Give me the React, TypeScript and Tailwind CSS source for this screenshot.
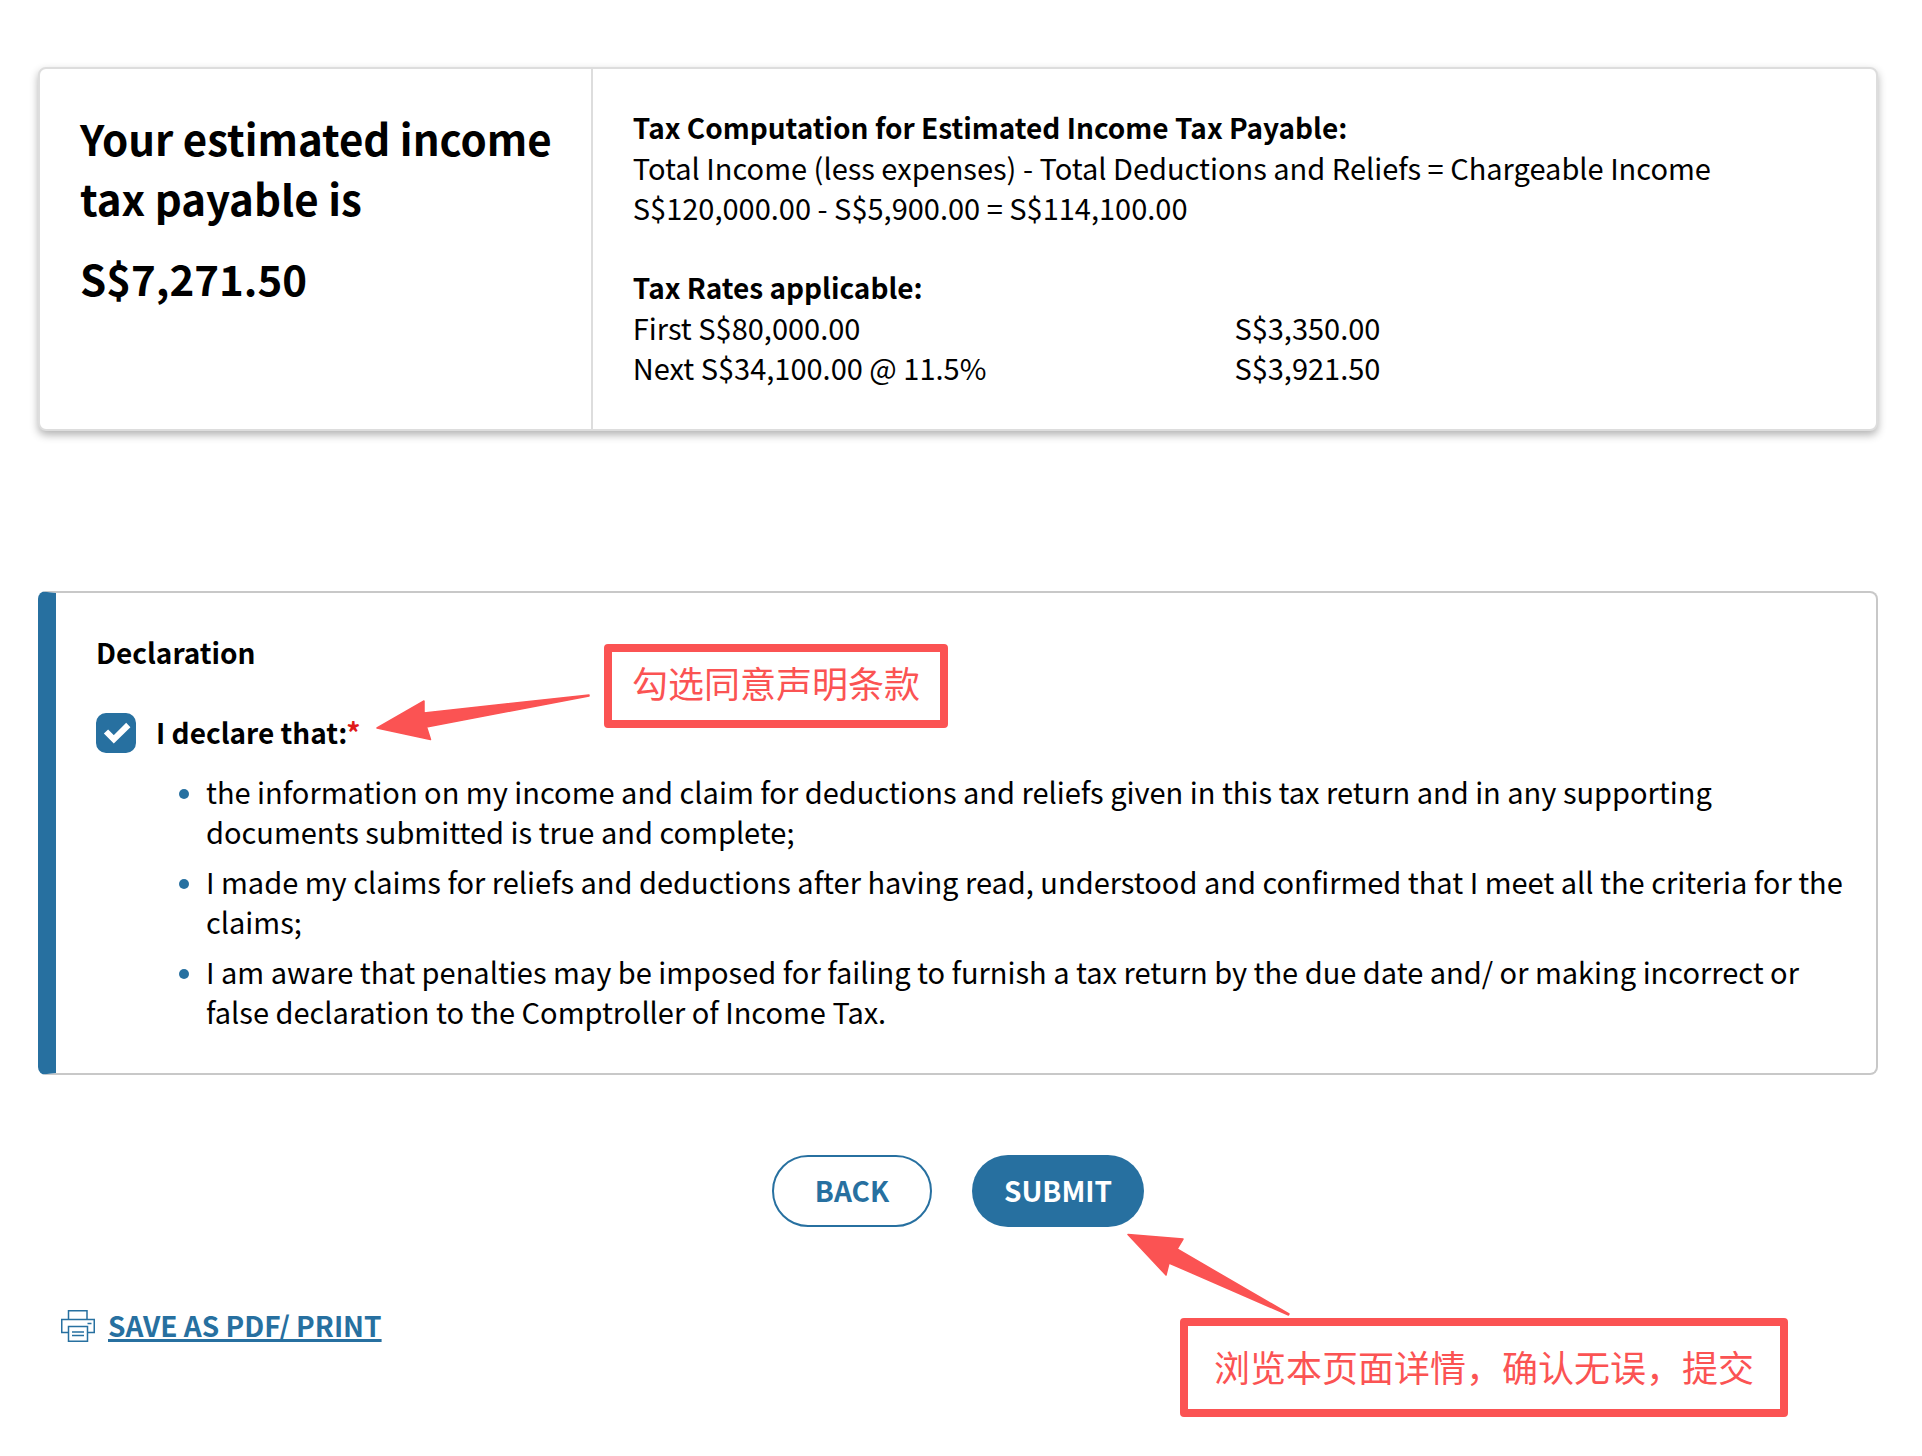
import { useState } from "react";

const rates = [
  { label: "First S$80,000.00", amount: "S$3,350.00" },
  { label: "Next S$34,100.00 @ 11.5%", amount: "S$3,921.50" },
];

const terms = [
  "the information on my income and claim for deductions and reliefs given in this tax return and in any supporting documents submitted is true and complete;",
  "I made my claims for reliefs and deductions after having read, understood and confirmed that I meet all the criteria for the claims;",
  "I am aware that penalties may be imposed for failing to furnish a tax return by the due date and/ or making incorrect or false declaration to the Comptroller of Income Tax.",
];

const Summary = () => (
  <section className="flex rounded-lg border-2 border-[#dddddd] bg-white shadow-[0_4px_8px_rgba(0,0,0,0.3)]">
    <div className="w-[30%] pt-[39px] pr-8 pb-[41px] pl-10 text-[42px] leading-[60px] font-bold">
      <h1>Your estimated income tax payable is</h1>
      <p className="mt-5">S$7,271.50</p>
    </div>
    <div className="flex-1 border-l-2 border-[#dddddd] px-10 pt-[38px] pb-[42px]">
      <h2 className="text-[28px] leading-10 font-bold">Tax Computation for Estimated Income Tax Payable:</h2>
      <p>Total Income (less expenses) - Total Deductions and Reliefs = Chargeable Income</p>
      <p>S$120,000.00 - S$5,900.00 = S$114,100.00</p>
      <table className="mt-10 w-full table-fixed text-left">
        <caption className="text-left text-[28px] leading-10 font-bold">Tax Rates applicable:</caption>
        <tbody>
          {rates.map((rate) => (
            <tr key={rate.label}>
              <td className="p-0">{rate.label}</td>
              <td className="p-0">{rate.amount}</td>
            </tr>
          ))}
        </tbody>
      </table>
    </div>
  </section>
);

const Declaration = () => {
  const [agreed, setAgreed] = useState(true);
  return (
    <section className="relative mt-40 rounded-lg border-2 border-l-[18px] border-[#c8c8c8] border-l-[#2770a0] pt-[39px] pr-8 pb-[42px] pl-10">
      <h2 className="text-[28px] leading-10 font-bold">Declaration</h2>
      <label className="mt-[41px] flex h-10 w-fit items-center gap-5 text-[28px] font-bold">
        <span className="grid size-10">
          <input
            type="checkbox"
            checked={agreed}
            onChange={() => setAgreed(!agreed)}
            className="peer col-start-1 row-start-1 size-10 appearance-none rounded-[10px] border-2 border-[#2770a0] checked:bg-[#2770a0]"
          />
          <svg viewBox="0 0 40 40" className="pointer-events-none col-start-1 row-start-1 hidden size-10 peer-checked:block">
            <path d="M10 18.5L17.8 26.3L32.3 12" fill="none" stroke="#fff" strokeWidth="6" />
          </svg>
        </span>
        <span className="pb-0.5 leading-10">I declare that:<span className="text-[#e01a1a]">*</span></span>
      </label>
      <ul className="mt-[18px] space-y-[10px] pl-[83px]">
        {terms.map((term) => (
          <li key={term} className="flex gap-[17px]">
            <span className="mt-[18px] size-[10px] shrink-0 rounded-full bg-[#2770a0]" />
            <span>{term}</span>
          </li>
        ))}
      </ul>
      <svg viewBox="0 0 216 48" className="absolute top-[101px] left-[320px] h-12 w-[216px]">
        <path
          d="M1 34L48 7L48 19L213 1L213 2L50.5 33L54.5 45.5Z"
          fill="#fb5353"
          stroke="#fb5353"
          strokeWidth="1.5"
          strokeLinejoin="round"
        />
      </svg>
      <Note className="top-[51px] left-[548px] h-[84px] w-[344px] pb-2" text="勾选同意声明条款" />
    </section>
  );
};

const Note = ({ text, className }: { text: string; className: string }) => (
  <div className={`absolute flex items-center justify-center rounded-sm border-8 border-[#fb5353] bg-white text-4xl whitespace-nowrap text-[#fb5353] ${className}`}>
    {text}
  </div>
);

const PrinterIcon = () => (
  <svg viewBox="0 0 34 32" className="h-8 w-[34px]" fill="none" stroke="#2770a0" strokeWidth="1.5">
    <path d="M7.5 9.5V.75h18.5V9.5" />
    <path d="M7.5 22.5H.75v-13h32.5v13H26.5" />
    <path d="M7.5 16.5h19v14.75h-19z" />
    <path d="M11 22h12M11 25.5h12M26.5 13.5h4" />
  </svg>
);

const Actions = () => (
  <div className="relative mt-20 flex justify-center gap-10 text-[28px]">
    <button className="h-18 min-w-40 rounded-full border-2 border-[#2770a0] px-7 pb-0.5 font-bold text-[#2770a0]">BACK</button>
    <div className="relative">
      <button className="h-18 min-w-[172px] rounded-full bg-[#2770a0] px-7 pb-0.5 font-bold text-white">SUBMIT</button>
      <svg viewBox="0 0 164 84" className="absolute top-[78px] left-[155px] h-[84px] w-[164px]">
        <path
          d="M1 1.5L56 6L50 16L162 81L161.5 82L42 30L39 42Z"
          fill="#fb5353"
          stroke="#fb5353"
          strokeWidth="1.5"
          strokeLinejoin="round"
        />
      </svg>
      <Note className="top-[163px] left-[208px] h-[99px] w-[608px] pb-1" text="浏览本页面详情，确认无误，提交" />
    </div>
  </div>
);

const App = () => (
  <main className="min-h-screen bg-white pt-[67px] pr-11 pb-[104px] pl-[38px] font-['Noto_Sans_CJK_SC',sans-serif] text-[29px] leading-10 text-black">
    <Summary />
    <Declaration />
    <Actions />
    <div className="mt-[78px] flex items-center gap-[13px] pl-[23px]">
      <PrinterIcon />
      <a href="#print" className="pb-0.5 text-[28px] leading-10 font-bold text-[#2770a0] underline decoration-[3px]">SAVE AS PDF/ PRINT</a>
    </div>
  </main>
);

export default App;
